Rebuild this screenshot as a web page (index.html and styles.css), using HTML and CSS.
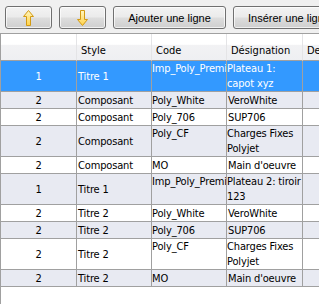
FILE: index.html
```html
<!DOCTYPE html>
<html lang="fr">
<head>
<meta charset="utf-8">
<title>Grille</title>
<link rel="stylesheet" href="styles.css">
</head>
<body>
<div class="app">
  <div class="toolbar">
    <button class="btn btn-icon" type="button" aria-label="Monter">
      <svg width="11" height="16" viewBox="0 0 11 16">
        <defs><linearGradient id="gu" x1="0" y1="0" x2="0" y2="1"><stop offset="0" stop-color="#fff6c0"/><stop offset="1" stop-color="#ffd24a"/></linearGradient></defs>
        <polygon points="5.5,0.5 10.5,6.5 7.5,6.5 7.5,15.5 3.5,15.5 3.5,6.5 0.5,6.5" fill="url(#gu)" stroke="#d39a12" stroke-width="1" stroke-linejoin="round"/>
      </svg>
    </button>
    <button class="btn btn-icon" type="button" aria-label="Descendre">
      <svg width="11" height="16" viewBox="0 0 11 16">
        <defs><linearGradient id="gd" x1="0" y1="0" x2="0" y2="1"><stop offset="0" stop-color="#fff6c0"/><stop offset="1" stop-color="#ffd24a"/></linearGradient></defs>
        <polygon points="5.5,15.5 10.5,9.5 7.5,9.5 7.5,0.5 3.5,0.5 3.5,9.5 0.5,9.5" fill="url(#gd)" stroke="#d39a12" stroke-width="1" stroke-linejoin="round"/>
      </svg>
    </button>
    <button class="btn btn-text" type="button">Ajouter une ligne</button>
    <button class="btn btn-text btn-wide" type="button">Insérer une ligne</button>
  </div>
  <div class="grid">
    <table class="table">
      <colgroup>
        <col class="c0"><col class="c1"><col class="c2"><col class="c3"><col class="c4">
      </colgroup>
      <thead>
        <tr>
          <th></th><th>Style</th><th>Code</th><th>Désignation</th><th>Description</th>
        </tr>
      </thead>
      <tbody>
        <tr class="sel tall"><td class="num">1</td><td>Titre 1</td><td class="top code">Imp_Poly_Premium</td><td class="top">Plateau 1: capot xyz</td><td></td></tr>
        <tr class="alt"><td class="num">2</td><td>Composant</td><td class="code">Poly_White</td><td>VeroWhite</td><td></td></tr>
        <tr><td class="num">2</td><td>Composant</td><td class="code">Poly_706</td><td>SUP706</td><td></td></tr>
        <tr class="alt tall"><td class="num">2</td><td>Composant</td><td class="top code">Poly_CF</td><td class="top">Charges Fixes Polyjet</td><td></td></tr>
        <tr><td class="num">2</td><td>Composant</td><td class="code">MO</td><td>Main d'oeuvre</td><td></td></tr>
        <tr class="alt tall"><td class="num">1</td><td>Titre 1</td><td class="top code">Imp_Poly_Premium</td><td class="top">Plateau 2: tiroir 123</td><td></td></tr>
        <tr><td class="num">2</td><td>Titre 2</td><td class="code">Poly_White</td><td>VeroWhite</td><td></td></tr>
        <tr class="alt"><td class="num">2</td><td>Titre 2</td><td class="code">Poly_706</td><td>SUP706</td><td></td></tr>
        <tr class="tall"><td class="num">2</td><td>Titre 2</td><td class="top code">Poly_CF</td><td class="top">Charges Fixes Polyjet</td><td></td></tr>
        <tr class="alt"><td class="num">2</td><td>Titre 2</td><td class="code">MO</td><td>Main d'oeuvre</td><td></td></tr>
      </tbody>
    </table>
  </div>
</div>
</body>
</html>
```
FILE: styles.css
```css
html, body {
  margin: 0;
  padding: 0;
  overflow: hidden;
  background: #f0f0f0;
}
.app {
  width: 319px;
  height: 304px;
  display: flex;
  flex-direction: column;
  font-family: "DejaVu Sans Condensed", "Liberation Sans", sans-serif;
  font-stretch: condensed;
  font-size: 11px;
  color: #000;
}
.toolbar {
  display: flex;
  gap: 7px;
  padding: 6px 0 4px 5px;
  flex: none;
  overflow: hidden;
}
.btn {
  flex: none;
  box-sizing: border-box;
  height: 23px;
  border: 1px solid #707070;
  border-radius: 3px;
  background: linear-gradient(#f3f3f3 0%, #ebebeb 48%, #dddddd 52%, #cfcfcf 100%);
  box-shadow: inset 0 0 0 1px rgba(255,255,255,0.7);
  font: inherit;
  font-family: "Liberation Sans", sans-serif;
  font-stretch: normal;
  font-size: 11px;
  color: #000;
  padding: 0;
  display: flex;
  align-items: center;
  justify-content: center;
}
.btn-icon { width: 47px; }
.btn-icon svg { display: block; }
.btn-text { width: 113px; }
.btn-wide { width: 118px; justify-content: flex-start; padding-left: 14px; }

.grid {
  flex: 1;
  background: #fff;
  border-top: 1px solid #a0a0a0;
  border-left: 1px solid #a0a0a0;
  overflow: hidden;
}
.table {
  border-collapse: separate;
  border-spacing: 0;
  table-layout: fixed;
  width: 380px;
}
.c0 { width: 76px; }
.c1 { width: 75px; }
.c2 { width: 75px; }
.c3 { width: 76px; }
.c4 { width: 78px; }

th {
  box-sizing: border-box;
  height: 27px;
  padding: 7px 0 0 4px;
  text-align: left;
  font-weight: normal;
  white-space: nowrap;
  overflow: hidden;
  border-right: 1px solid #e4e4e6;
  border-bottom: 1px solid #a0a0a0;
  background: linear-gradient(#ffffff 0%, #ffffff 40%, #f2f2f4 42%, #eeeff2 100%);
}
td {
  box-sizing: border-box;
  height: 17px;
  padding: 0 0 0 1px;
  line-height: 15px;
  letter-spacing: -0.15px;
  vertical-align: middle;
  border-right: 1px solid #a0a0a0;
  border-bottom: 1px solid #a0a0a0;
  white-space: nowrap;
  overflow: hidden;
}
tr.tall td { height: 31px; }
td.top { vertical-align: top; white-space: normal; padding-left: 0; }
td.code { padding-left: 0; white-space: nowrap; }
td.num { text-align: center; padding: 0; }
tr.alt td { background: #e8eaf2; }
tr.sel td { background: #3399ff; color: #fff; }
```
